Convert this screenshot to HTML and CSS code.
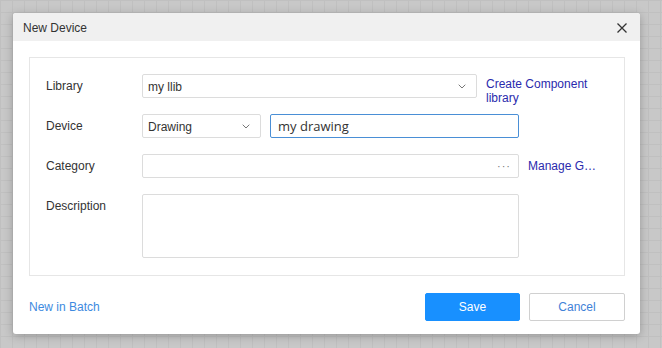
FILE: index.html
```html
<!DOCTYPE html>
<html lang="en">
  <head>
    <meta charset="UTF-8" />
    <meta name="viewport" content="width=device-width, initial-scale=1.0" />
    <title>New Device</title>

    <link rel="stylesheet" href="styles.css">
  </head>
  <body>
    <div class="dialog">
      <div class="dialog-header">
        <span class="dialog-title">New Device</span>
        <svg class="close" width="10" height="10" viewBox="0 0 10 10">
          <path d="M0.5 0.5 L9.5 9.5 M9.5 0.5 L0.5 9.5" stroke="#333" stroke-width="1.3" fill="none" />
        </svg>
      </div>

      <div class="dialog-body">
        <div class="form-panel">
          <div class="form-row">
            <label class="form-label">Library</label>
            <div class="select select-library">
              <span>my llib</span>
              <svg class="chevron" width="8" height="5" viewBox="0 0 8 5">
                <path d="M0.7 0.7 L4 4 L7.3 0.7" stroke="#777" stroke-width="1" fill="none" />
              </svg>
            </div>
            <a class="side-link wrap">Create Component library</a>
          </div>

          <div class="form-row">
            <label class="form-label">Device</label>
            <div class="select select-device">
              <span>Drawing</span>
              <svg class="chevron" width="8" height="5" viewBox="0 0 8 5">
                <path d="M0.7 0.7 L4 4 L7.3 0.7" stroke="#777" stroke-width="1" fill="none" />
              </svg>
            </div>
            <input class="text-input focused" type="text" value="my drawing" />
          </div>

          <div class="form-row">
            <label class="form-label">Category</label>
            <div class="picker">
              <span class="dots">&middot;&middot;&middot;</span>
            </div>
            <a class="side-link ellipsis" title="Manage Group">Manage Group</a>
          </div>

          <div class="form-row tall">
            <label class="form-label">Description</label>
            <textarea class="textarea"></textarea>
          </div>
        </div>

        <div class="dialog-footer">
          <a class="batch-link">New in Batch</a>
          <div class="buttons">
            <button class="btn btn-primary">Save</button>
            <button class="btn btn-default">Cancel</button>
          </div>
        </div>
      </div>
    </div>
  </body>
</html>
```

FILE: styles.css
```css
body {
  margin: 0;
  height: 348px;
  overflow: hidden;
  font-family: "Liberation Sans", Arial, sans-serif;
  font-size: 12px;
  color: #333;
  background-color: #c8c8c8;
  background-image:
    linear-gradient(to right, #c0c0c0 1px, transparent 1px),
    linear-gradient(to bottom, #c0c0c0 1px, transparent 1px);
  background-size: 12px 12px;
}
.dialog {
  margin: 13px 0 0 13px;
  width: 627px;
  height: 321px;
  background: #fff;
  border-radius: 3px;
  box-shadow: 0 2px 10px rgba(0, 0, 0, 0.25);
  overflow: hidden;
}
.dialog-header {
  height: 28px;
  background: #f0f0f0;
  display: flex;
  align-items: center;
  justify-content: space-between;
  padding: 1px 13px 0 10px;
  box-sizing: border-box;
}
.dialog-title {
  font-size: 12px;
  color: #333;
}
.dialog-body {
  padding: 16px 15px 0 16px;
}
.form-panel {
  border: 1px solid #e6e6e6;
  padding: 16px 16px 17px 16px;
  display: flex;
  flex-direction: column;
  gap: 16px;
}
.form-row {
  display: flex;
  align-items: flex-start;
  gap: 9px;
  height: 24px;
}
.form-row.tall {
  height: auto;
}
.form-label {
  width: 87px;
  line-height: 25px;
  color: #333;
}
.select {
  box-sizing: border-box;
  height: 24px;
  border: 1px solid #dcdcdc;
  border-radius: 2px;
  display: flex;
  align-items: center;
  justify-content: space-between;
  padding: 1px 10px 0 5px;
  color: #333;
}
.select-library {
  width: 335px;
}
.select-device {
  width: 119px;
}
.chevron {
  display: block;
}
.text-input {
  box-sizing: border-box;
  width: 249px;
  height: 24px;
  margin: 0;
  padding: 0 7px;
  border: 1px solid #dcdcdc;
  border-radius: 2px;
  font-family: "Open Sans", "Noto Sans", sans-serif;
  font-size: 13px;
  color: #333;
  outline: none;
}
.text-input.focused {
  border-color: #4a8fd6;
}
.picker {
  box-sizing: border-box;
  width: 377px;
  height: 24px;
  border: 1px solid #dcdcdc;
  border-radius: 2px;
  display: flex;
  align-items: center;
  justify-content: flex-end;
  padding-right: 7px;
}
.dots {
  color: #777;
  font-size: 11px;
  letter-spacing: 1px;
}
.side-link {
  flex: 1;
  min-width: 0;
  color: #2a2aad;
  cursor: pointer;
}
.side-link.wrap {
  line-height: 14px;
  margin-top: 3px;
}
.side-link.ellipsis {
  flex: none;
  width: 71px;
  line-height: 25px;
  white-space: nowrap;
  overflow: hidden;
  text-overflow: ellipsis;
}
.textarea {
  box-sizing: border-box;
  width: 377px;
  height: 64px;
  margin: 0;
  border: 1px solid #dcdcdc;
  border-radius: 2px;
  resize: none;
}
.dialog-footer {
  display: flex;
  align-items: center;
  justify-content: space-between;
  margin-top: 17px;
}
.batch-link {
  color: #3d8ae0;
  cursor: pointer;
}
.buttons {
  display: flex;
  gap: 9px;
}
.btn {
  box-sizing: border-box;
  width: 95px;
  height: 28px;
  border-radius: 2px;
  font-family: "Liberation Sans", Arial, sans-serif;
  font-size: 12px;
  cursor: pointer;
}
.btn-primary {
  background: #1890ff;
  border: 1px solid #1890ff;
  color: #fff;
}
.btn-default {
  width: 96px;
  background: #fff;
  border: 1px solid #d0d0d0;
  color: #3f82d8;
}
```
